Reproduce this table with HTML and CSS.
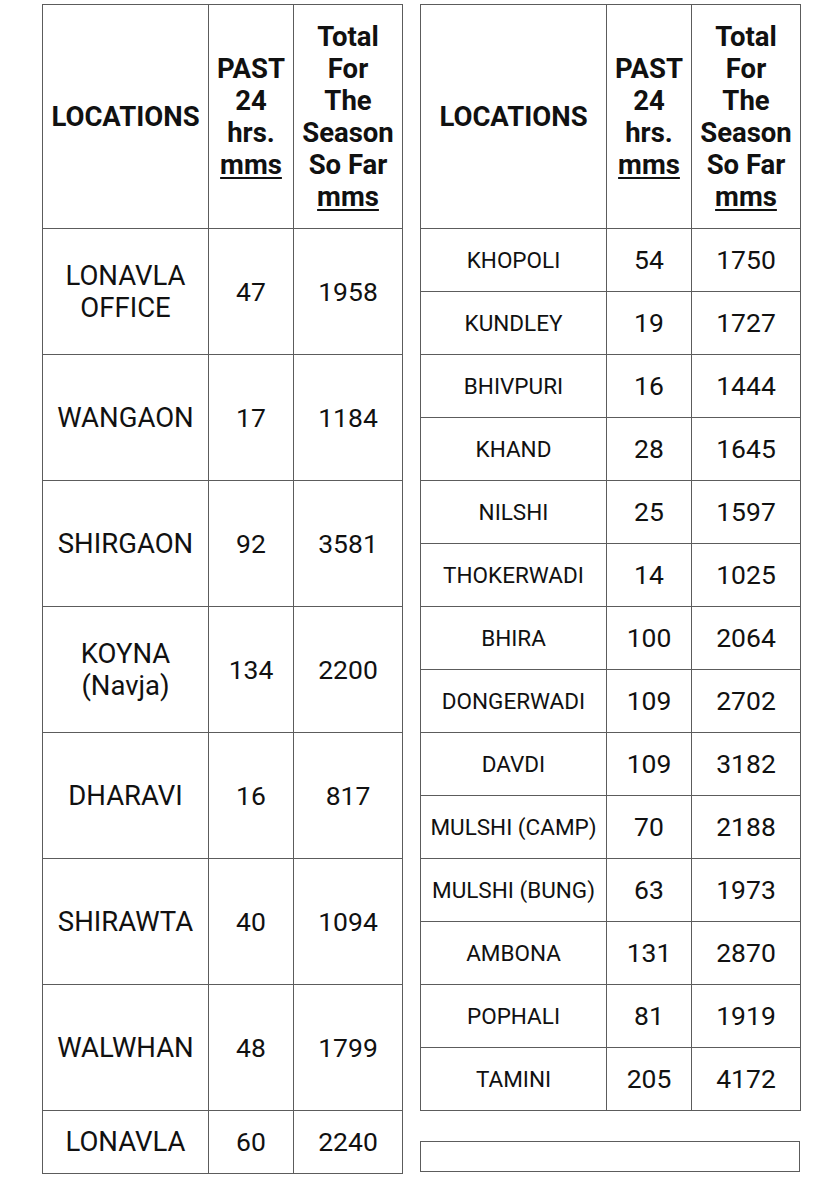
FILE: index.html
```html
<!DOCTYPE html>
<html>
<head>
<meta charset="utf-8">
<link rel="stylesheet" href="styles.css">
</head>
<body>
<div class="page">
  <table class="tbl left">
    <colgroup><col class="c1l"><col class="c2"><col class="c3"></colgroup>
    <tr class="head">
      <th>LOCATIONS</th>
      <th>PAST<br>24<br>hrs.<br><u>mms</u></th>
      <th>Total<br>For<br>The<br>Season<br>So Far<br><u>mms</u></th>
    </tr>
    <tr class="big"><td class="lloc">LONAVLA<br>OFFICE</td><td>47</td><td>1958</td></tr>
    <tr class="big"><td class="lloc">WANGAON</td><td>17</td><td>1184</td></tr>
    <tr class="big"><td class="lloc">SHIRGAON</td><td>92</td><td>3581</td></tr>
    <tr class="big"><td class="lloc">KOYNA<br>(Navja)</td><td>134</td><td>2200</td></tr>
    <tr class="big"><td class="lloc">DHARAVI</td><td>16</td><td>817</td></tr>
    <tr class="big"><td class="lloc">SHIRAWTA</td><td>40</td><td>1094</td></tr>
    <tr class="big"><td class="lloc">WALWHAN</td><td>48</td><td>1799</td></tr>
    <tr class="small"><td class="lloc">LONAVLA</td><td>60</td><td>2240</td></tr>
  </table>
  <div class="rightcol">
    <table class="tbl right">
      <colgroup><col class="c1r"><col class="c2"><col class="c3"></colgroup>
      <tr class="head">
        <th>LOCATIONS</th>
        <th>PAST<br>24<br>hrs.<br><u>mms</u></th>
        <th>Total<br>For<br>The<br>Season<br>So Far<br><u>mms</u></th>
      </tr>
      <tr class="small"><td class="loc">KHOPOLI</td><td>54</td><td>1750</td></tr>
      <tr class="small"><td class="loc">KUNDLEY</td><td>19</td><td>1727</td></tr>
      <tr class="small"><td class="loc">BHIVPURI</td><td>16</td><td>1444</td></tr>
      <tr class="small"><td class="loc">KHAND</td><td>28</td><td>1645</td></tr>
      <tr class="small"><td class="loc">NILSHI</td><td>25</td><td>1597</td></tr>
      <tr class="small"><td class="loc">THOKERWADI</td><td>14</td><td>1025</td></tr>
      <tr class="small"><td class="loc">BHIRA</td><td>100</td><td>2064</td></tr>
      <tr class="small"><td class="loc">DONGERWADI</td><td>109</td><td>2702</td></tr>
      <tr class="small"><td class="loc">DAVDI</td><td>109</td><td>3182</td></tr>
      <tr class="small"><td class="loc">MULSHI (CAMP)</td><td>70</td><td>2188</td></tr>
      <tr class="small"><td class="loc">MULSHI (BUNG)</td><td>63</td><td>1973</td></tr>
      <tr class="small"><td class="loc">AMBONA</td><td>131</td><td>2870</td></tr>
      <tr class="small"><td class="loc">POPHALI</td><td>81</td><td>1919</td></tr>
      <tr class="small"><td class="loc">TAMINI</td><td>205</td><td>4172</td></tr>
    </table>
    <div class="emptybox"></div>
  </div>
</div>
</body>
</html>
```

FILE: styles.css
```css
html, body {
  margin: 0;
  padding: 0;
  background: #ffffff;
}
.page {
  display: flex;
  align-items: flex-start;
  gap: 17px;
  padding: 4px 0 0 42px;
  font-family: Roboto, "Liberation Sans", sans-serif;
  color: #111111;
}
.tbl {
  border-collapse: collapse;
  table-layout: fixed;
}
.tbl.left { width: 360px; }
.tbl.right { width: 380px; }
.c1l { width: 166px; }
.c1r { width: 186px; }
.c2 { width: 85px; }
.c3 { width: 109px; }
.tbl th, .tbl td {
  border: 1.5px solid #5c5c5c;
  text-align: center;
  vertical-align: middle;
  padding: 0 1px;
  font-size: 26.5px;
  line-height: 32px;
}
.tbl th {
  font-weight: 700;
  font-size: 27.5px;
}
.tbl u {
  text-decoration-thickness: 2px;
  text-underline-offset: 3px;
}
.head th { height: 223px; }
.big td { height: 125px; }
.small td { height: 62px; }
.tbl td.lloc {
  font-size: 27.5px;
}
.tbl td.loc {
  font-size: 22.5px;
}
.rightcol {
  display: flex;
  flex-direction: column;
  width: 380px;
}
.emptybox {
  margin-top: 30px;
  height: 29px;
  border: 1.5px solid #5c5c5c;
}
```
